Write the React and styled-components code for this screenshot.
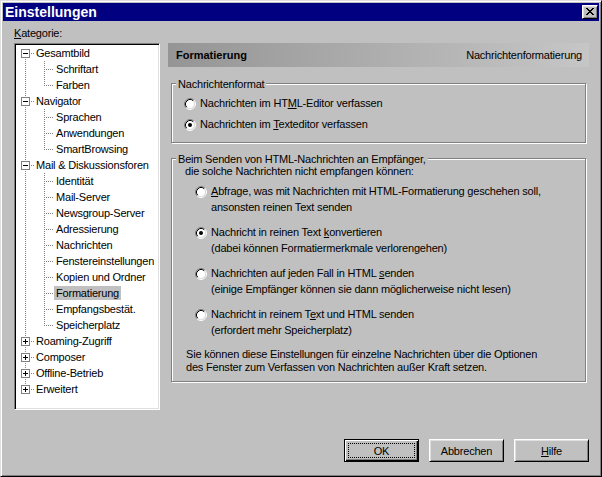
import React from 'react';
import styled, { createGlobalStyle } from 'styled-components';

const GlobalStyle = createGlobalStyle`
  html, body { margin: 0; padding: 0; background: #c0c0c0; }
  body {
    font-family: "Liberation Sans", Arial, sans-serif;
    font-size: 11px;
    color: #000;
  }
  * { box-sizing: border-box; }
`;

const Window = styled.div`
  width: 602px;
  height: 477px;
  display: flex;
  flex-direction: column;
  background: #c0c0c0;
  border: 1px solid;
  border-color: #dfdfdf #000 #000 #dfdfdf;
  box-shadow: inset 1px 1px #fff, inset -1px -1px #808080;
  padding: 2px;
  overflow: hidden;
`;

const TitleBar = styled.div`
  height: 18px;
  flex-shrink: 0;
  background: #000080;
  display: flex;
  align-items: center;
  justify-content: space-between;
  padding: 0 1px 0 2px;
`;

const Title = styled.span`
  color: #fff;
  font-weight: bold;
  font-size: 14px;
  line-height: 18px;
`;

const CloseButton = styled.div`
  width: 16px;
  height: 14px;
  background: #c0c0c0;
  border: 1px solid;
  border-color: #fff #000 #000 #fff;
  box-shadow: inset 1px 1px #dfdfdf, inset -1px -1px #808080;
  display: flex;
  align-items: center;
  justify-content: center;
  padding-bottom: 1px;
`;

const Body = styled.div`
  flex: 1;
  display: flex;
  flex-direction: column;
  padding: 5px 10px 0 11px;
`;

const Main = styled.div`
  display: grid;
  grid-template-columns: 146px 1fr;
  grid-template-rows: 17px 367px;
  column-gap: 8px;
`;

const CategoryLabel = styled.div`
  grid-column: 1;
  grid-row: 1;
  line-height: 14px;
  letter-spacing: -0.2px;
`;

const Mn = styled.span`
  text-decoration: underline;
  text-underline-offset: 1px;
`;

const TreeBox = styled.div`
  grid-column: 1;
  grid-row: 2;
  background: #fff;
  border: 1px solid;
  border-color: #808080 #fff #fff #808080;
  box-shadow: inset 1px 1px #000, inset -1px -1px #dfdfdf;
  padding: 1px;
  overflow: hidden;
`;

const TreeRow = styled.div`
  height: 16px;
  display: flex;
  align-items: center;
`;

const GutterSvg = styled.svg`
  flex-shrink: 0;
  display: block;
`;

const TreeLabel = styled.span`
  padding: 0 2px;
  line-height: 14px;
  white-space: nowrap;
  letter-spacing: -0.2px;
  background: ${(p) => (p.$selected ? '#c0c0c0' : 'transparent')};
`;

const Panel = styled.div`
  grid-column: 2;
  grid-row: 2;
  display: flex;
  flex-direction: column;
`;

const PanelHeader = styled.div`
  height: 24px;
  display: flex;
  align-items: center;
  justify-content: space-between;
  padding: 0 7px 0 8px;
  background: linear-gradient(to right, #959595, #c6c6c6);
`;

const HeaderTitle = styled.span`
  font-weight: bold;
  line-height: 14px;
`;

const HeaderSub = styled.span`
  line-height: 14px;
  letter-spacing: -0.2px;
`;

const GroupBox = styled.div`
  margin: ${(p) => p.$mt}px 3px 0 3px;
  border: 1px solid #808080;
  box-shadow: inset 1px 1px #fff, 1px 1px #fff;
  padding-bottom: ${(p) => p.$pb}px;
  display: flex;
  flex-direction: column;
`;

const Legend = styled.div`
  width: fit-content;
  margin: -6px 0 0 4px;
  padding: 0 2px;
  background: #c0c0c0;
  line-height: 13px;
  letter-spacing: -0.2px;
  white-space: nowrap;
`;

const Subtitle = styled.div`
  padding-left: 13px;
  line-height: 11px;
  letter-spacing: -0.2px;
`;

const RadioStack = styled.div`
  display: flex;
  flex-direction: column;
  gap: ${(p) => p.$gap}px;
  margin-top: ${(p) => p.$mt}px;
  padding-left: ${(p) => p.$pl}px;
`;

const RadioRow = styled.div`
  display: flex;
  align-items: flex-start;
  gap: 4px;
`;

const RadioSvg = styled.svg`
  flex-shrink: 0;
  display: block;
  margin-top: 3px;
`;

const RadioText = styled.div`
  line-height: 16px;
  letter-spacing: -0.2px;
  white-space: nowrap;
`;

const Note = styled.div`
  margin-top: 10px;
  padding-left: 14px;
  line-height: 13px;
  letter-spacing: -0.2px;
  white-space: nowrap;
`;

const ButtonRow = styled.div`
  display: flex;
  justify-content: flex-end;
  gap: 10px;
  margin-top: 29px;
`;

const Button = styled.div`
  width: 75px;
  height: 23px;
  background: #c0c0c0;
  border: 1px solid;
  border-color: ${(p) => (p.$default ? '#000' : '#fff #000 #000 #fff')};
  box-shadow: ${(p) =>
    p.$default
      ? 'inset 1px 1px #fff, inset -1px -1px #000, inset -2px -2px #808080'
      : 'inset 1px 1px #dfdfdf, inset -1px -1px #808080'};
  padding: 3px;
  display: flex;
`;

const FocusRing = styled.span`
  flex: 1;
  display: flex;
  align-items: center;
  justify-content: center;
  border: 1px dotted ${(p) => (p.$focused ? '#000' : 'transparent')};
  line-height: 14px;
  letter-spacing: -0.2px;
`;

const tree = [
  { label: 'Gesamtbild', level: 0, expanded: true, first: true },
  { label: 'Schriftart', level: 1 },
  { label: 'Farben', level: 1, lastChild: true },
  { label: 'Navigator', level: 0, expanded: true },
  { label: 'Sprachen', level: 1 },
  { label: 'Anwendungen', level: 1 },
  { label: 'SmartBrowsing', level: 1, lastChild: true },
  { label: 'Mail & Diskussionsforen', level: 0, expanded: true },
  { label: 'Identität', level: 1 },
  { label: 'Mail-Server', level: 1 },
  { label: 'Newsgroup-Server', level: 1 },
  { label: 'Adressierung', level: 1 },
  { label: 'Nachrichten', level: 1 },
  { label: 'Fenstereinstellungen', level: 1 },
  { label: 'Kopien und Ordner', level: 1 },
  { label: 'Formatierung', level: 1, selected: true },
  { label: 'Empfangsbestät.', level: 1 },
  { label: 'Speicherplatz', level: 1, lastChild: true },
  { label: 'Roaming-Zugriff', level: 0 },
  { label: 'Composer', level: 0 },
  { label: 'Offline-Betrieb', level: 0 },
  { label: 'Erweitert', level: 0, lastTop: true },
];

const dot = { stroke: '#808080', strokeDasharray: '1 1', fill: 'none' };

function TreeGutter({ row }) {
  if (row.level === 0) {
    return (
      <GutterSvg width="18" height="16" viewBox="0 0 18 16" shapeRendering="crispEdges">
        {!row.first && <path d="M9.5 0V4" {...dot} />}
        {!row.lastTop && <path d="M9.5 14V16" {...dot} />}
        <path d="M15 8.5H18" {...dot} />
        <rect x="5.5" y="4.5" width="8" height="8" fill="#fff" stroke="#808080" />
        <path d="M7 8.5H12" stroke="#000" />
        {!row.expanded && <path d="M9.5 6V11" stroke="#000" />}
      </GutterSvg>
    );
  }
  return (
    <GutterSvg width="38" height="16" viewBox="0 0 38 16" shapeRendering="crispEdges">
      <path d="M9.5 0V16" {...dot} />
      <path d={row.lastChild ? 'M28.5 0V9' : 'M28.5 0V16'} {...dot} />
      <path d="M30 8.5H38" {...dot} />
    </GutterSvg>
  );
}

function Radio({ checked }) {
  return (
    <RadioSvg width="12" height="12" viewBox="0 0 12 12">
      <circle cx="6" cy="6" r="4.5" fill="#fff" />
      <path d="M2.11 9.89A5.5 5.5 0 0 1 9.89 2.11" stroke="#808080" fill="none" />
      <path d="M2.82 9.18A4.5 4.5 0 0 1 9.18 2.82" stroke="#000" fill="none" />
      <path d="M9.89 2.11A5.5 5.5 0 0 1 2.11 9.89" stroke="#fff" fill="none" />
      <path d="M9.18 2.82A4.5 4.5 0 0 1 2.82 9.18" stroke="#dfdfdf" fill="none" />
      {checked && <circle cx="6" cy="6" r="2" fill="#000" />}
    </RadioSvg>
  );
}

function CloseGlyph() {
  return (
    <svg width="8" height="7" viewBox="0 0 8 7" shapeRendering="crispEdges" style={{ display: 'block' }}>
      <path
        fill="#000"
        d="M0 0h2v1H0z M6 0h2v1H6z M1 1h2v1H1z M5 1h2v1H5z M2 2h4v1H2z M3 3h2v1H3z M2 4h4v1H2z M1 5h2v1H1z M5 5h2v1H5z M0 6h2v1H0z M6 6h2v1H6z"
      />
    </svg>
  );
}

const sendOptions = [
  {
    checked: false,
    line1: (
      <>
        <Mn>A</Mn>bfrage, was mit Nachrichten mit HTML-Formatierung geschehen soll,
      </>
    ),
    line2: 'ansonsten reinen Text senden',
  },
  {
    checked: true,
    line1: (
      <>
        Nachricht in reinen Text <Mn>k</Mn>onvertieren
      </>
    ),
    line2: '(dabei können Formatiermerkmale verlorengehen)',
  },
  {
    checked: false,
    line1: (
      <>
        Nachrichten auf jeden Fall in HTML <Mn>s</Mn>enden
      </>
    ),
    line2: '(einige Empfänger können sie dann möglicherweise nicht lesen)',
  },
  {
    checked: false,
    line1: (
      <>
        Nachricht in reinem T<Mn>e</Mn>xt und HTML senden
      </>
    ),
    line2: '(erfordert mehr Speicherplatz)',
  },
];

export default function App() {
  return (
    <>
      <GlobalStyle />
      <Window>
        <TitleBar>
          <Title>Einstellungen</Title>
          <CloseButton>
            <CloseGlyph />
          </CloseButton>
        </TitleBar>
        <Body>
          <Main>
            <CategoryLabel>
              <Mn>K</Mn>ategorie:
            </CategoryLabel>
            <TreeBox>
              {tree.map((row) => (
                <TreeRow key={row.label}>
                  <TreeGutter row={row} />
                  <TreeLabel $selected={row.selected}>{row.label}</TreeLabel>
                </TreeRow>
              ))}
            </TreeBox>
            <Panel>
              <PanelHeader>
                <HeaderTitle>Formatierung</HeaderTitle>
                <HeaderSub>Nachrichtenformatierung</HeaderSub>
              </PanelHeader>
              <GroupBox $mt={16} $pb={10}>
                <Legend>Nachrichtenformat</Legend>
                <RadioStack $gap={5} $mt={4} $pl={12}>
                  <RadioRow>
                    <Radio />
                    <RadioText>
                      Nachrichten im HT<Mn>M</Mn>L-Editor verfassen
                    </RadioText>
                  </RadioRow>
                  <RadioRow>
                    <Radio checked />
                    <RadioText>
                      Nachrichten im <Mn>T</Mn>exteditor verfassen
                    </RadioText>
                  </RadioRow>
                </RadioStack>
              </GroupBox>
              <GroupBox $mt={15} $pb={7}>
                <Legend>Beim Senden von HTML-Nachrichten an Empfänger,</Legend>
                <Subtitle>die solche Nachrichten nicht empfangen können:</Subtitle>
                <RadioStack $gap={9} $mt={6} $pl={23}>
                  {sendOptions.map((o, i) => (
                    <RadioRow key={i}>
                      <Radio checked={o.checked} />
                      <RadioText>
                        {o.line1}
                        <br />
                        {o.line2}
                      </RadioText>
                    </RadioRow>
                  ))}
                </RadioStack>
                <Note>
                  Sie können diese Einstellungen für einzelne Nachrichten über die Optionen
                  <br />
                  des Fenster zum Verfassen von Nachrichten außer Kraft setzen.
                </Note>
              </GroupBox>
            </Panel>
          </Main>
          <ButtonRow>
            <Button $default>
              <FocusRing $focused>OK</FocusRing>
            </Button>
            <Button>
              <FocusRing>Abbrechen</FocusRing>
            </Button>
            <Button>
              <FocusRing>
                <Mn>H</Mn>ilfe
              </FocusRing>
            </Button>
          </ButtonRow>
        </Body>
      </Window>
    </>
  );
}
